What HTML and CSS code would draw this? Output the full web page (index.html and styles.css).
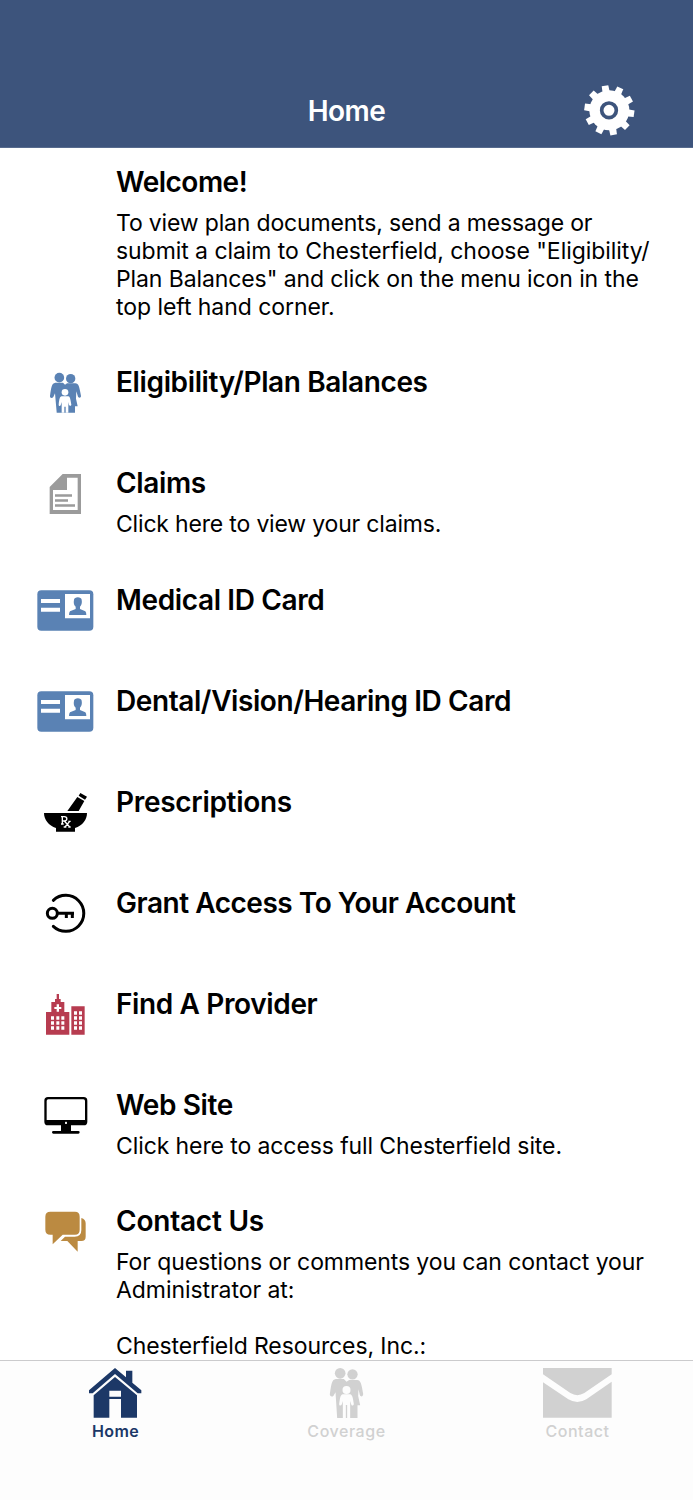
FILE: index.html
```
<!DOCTYPE html>
<html lang="en">
<head>
<meta charset="utf-8">
<title>Home</title>
<link rel="stylesheet" href="styles.css">
</head>
<body>
<div class="app">
  <header class="header">
    <h1 class="header-title">Home</h1>
    <svg class="gear" viewBox="0 0 240 225">
      <g fill="#fff">
        <circle cx="118" cy="106" r="60"/>
        <g id="teeth" transform="translate(118 106) rotate(-10)">
          <path id="t" d="M-11-50L-10-75H10L11-50Z"/>
          <use href="#t" transform="rotate(36)"/><use href="#t" transform="rotate(72)"/><use href="#t" transform="rotate(108)"/>
          <use href="#t" transform="rotate(144)"/><use href="#t" transform="rotate(180)"/><use href="#t" transform="rotate(216)"/>
          <use href="#t" transform="rotate(252)"/><use href="#t" transform="rotate(288)"/><use href="#t" transform="rotate(324)"/>
        </g>
      </g>
      <circle cx="117" cy="106" r="22" fill="#fff" stroke="#3d547c" stroke-width="11"/>
    </svg>
  </header>

  <main class="list">
    <section class="row">
      <div class="icon"></div>
      <div class="text">
        <h2 class="w-welcome">Welcome!</h2>
        <p><span class="b1">To view plan documents, send a message or</span><br><span class="b2">submit a claim to Chesterfield, choose "Eligibility/</span><br><span class="b3">Plan Balances" and click on the menu icon in the</span><br><span class="b4">top left hand corner.</span></p>
      </div>
    </section>
    <section class="row">
      <svg class="icon" viewBox="0 6 225 180">
        <g fill="#5a82b4">
          <circle cx="88" cy="53" r="14.5"/><circle cx="122" cy="56" r="14"/>
          <path d="M76 68H99L105 74L111 70H136C146 71 148 79 153 108C153 114 147 115 144 110L139 94L138 116L143 139H135V158H80V157L75 100L70 111C66 116 59 114 60 108C64 80 65 70 76 68Z"/>
        </g>
        <g fill="#fff"><circle cx="105" cy="97" r="10"/>
          <path d="M95 109H115C120 110 121 116 124 134C123 139 118 138 117 135L115 126V158H107V140H103V158H95V126L92 136C90 139 86 138 86 134C88 117 89 110 95 109Z"/></g>
      </svg>
      <div class="text"><h2 class="w-elig">Eligibility/Plan Balances</h2></div>
    </section>
    <section class="row">
      <svg class="icon" viewBox="0 3 225 180">
        <path fill="#9b9b9b" fill-rule="evenodd" d="M98 36H153V156H59V75ZM111 47V84H69V144H143V47Z"/>
        <path stroke="#9b9b9b" stroke-width="8" d="M75 100.500H126M75 115.500H114M75 130.500H135"/>
      </svg>
      <div class="text"><h2 class="w-claims">Claims</h2><p><span class="b5">Click here to view your claims.</span></p></div>
    </section>
    <section class="row">
      <svg class="icon" viewBox="0 0 225 180">
        <rect x="22" y="31" width="168" height="121" rx="12" fill="#5a82b4"/>
        <path fill="#fff" d="M33 57H90V69H33ZM33 83H90V95H33ZM105 42H180V115H105Z"/>
        <path fill="#5a82b4" d="M132 59C132 49 155 49 155 59C157 69 154 76 150 80V87L166 94Q169 97 169 105H117Q117 97 120 94L137 87V80C132 76 130 69 132 59Z"/>
      </svg>
      <div class="text"><h2 class="w-med">Medical ID Card</h2></div>
    </section>
    <section class="row">
      <svg class="icon" viewBox="0 0 225 180">
        <rect x="22" y="31" width="168" height="121" rx="12" fill="#5a82b4"/>
        <path fill="#fff" d="M33 57H90V69H33ZM33 83H90V95H33ZM105 42H180V115H105Z"/>
        <path fill="#5a82b4" d="M132 59C132 49 155 49 155 59C157 69 154 76 150 80V87L166 94Q169 97 169 105H117Q117 97 120 94L137 87V80C132 76 130 69 132 59Z"/>
      </svg>
      <div class="text"><h2 class="w-dental">Dental/Vision/Hearing ID Card</h2></div>
    </section>
    <section class="row">
      <svg class="icon" viewBox="0 0 225 180">
        <path d="M42 93H171C171 113 158 131 135 138V149H78V138C56 131 42 113 42 93ZM112 87L142 45L163 57L146 87ZM146 41L151 33L171 44L165 53Z"/>
        <path fill="none" stroke="#fff" stroke-width="4" d="M93 104H103C113 104 113 117 103 117H97M97 104V126M93 126H101M103 117L119 135M119 118L105 135M101 135H109M115 135H122M115 118H122"/>
      </svg>
      <div class="text"><h2 class="w-presc">Prescriptions</h2></div>
    </section>
    <section class="row">
      <svg class="icon" viewBox="0 0 225 180">
        <g fill="none" stroke="#000" stroke-width="9">
          <path stroke-linecap="round" d="M70 52A54 54 0 1 1 70 130"/>
          <circle cx="67" cy="91" r="15"/>
          <path d="M82 91H132M109 91V105M127 91V105" />
        </g>
      </svg>
      <div class="text"><h2 class="w-grant">Grant Access To Your Account</h2></div>
    </section>
    <section class="row">
      <svg class="icon" viewBox="0 0 225 180">
        <path fill="#b73c50" d="M48 84H64V54H75V45H80V30H87V45H92V54H103V84H118V152H48ZM124 67H164V152H124Z"/>
        <path fill="#fff" d="M80 61H87V69H94V75H87V83H80V75H73V69H80ZM63 97H72V107H63ZM79 97H88V107H79ZM94 97H103V107H94ZM63 112H72V122H63ZM79 112H88V122H79ZM94 112H103V122H94ZM63 127H72V137H63ZM79 127H88V137H79ZM94 127H103V137H94ZM132 82H141V92H132ZM147 82H156V92H147ZM132 97H141V107H132ZM147 97H156V107H147ZM132 112H141V122H132ZM147 112H156V122H147ZM132 127H141V137H132ZM147 127H156V137H147Z"/>
      </svg>
      <div class="text"><h2 class="w-find">Find A Provider</h2></div>
    </section>
    <section class="row">
      <svg class="icon" viewBox="0 0 225 180">
        <path fill-rule="evenodd" d="M54 36H161Q172 36 172 47V110Q172 121 161 121H123V138H145Q149 138 149 142T145 146H70Q66 146 66 142T70 138H93V121H54Q43 121 43 110V47Q43 36 54 36ZM55 43Q50 43 50 48V105H165V48Q165 43 160 43Z"/>
        <rect x="105" y="110" width="6" height="7" rx="2" fill="#fff"/>
      </svg>
      <div class="text"><h2 class="w-web">Web Site</h2><p><span class="b6">Click here to access full Chesterfield site.</span></p></div>
    </section>
    <section class="row">
      <svg class="icon" viewBox="0 4 225 180">
        <g fill="#bb8a41">
          <path d="M61 36H135Q149 36 149 51V90Q149 105 135 105H98L68 134V105H61Q46 105 46 90V51Q46 36 61 36Z"/>
          <path d="M154 55Q167 59 167 71V111Q167 124 154 124H143V156L112 124H92L105 111H134Q154 111 154 91Z"/>
        </g>
      </svg>
      <div class="text"><h2 class="w-contact">Contact Us</h2><p><span class="b7">For questions or comments you can contact your</span><br><span class="b8">Administrator at:</span><br><br><span class="b9">Chesterfield Resources, Inc.:</span></p></div>
    </section>
  </main>

  <nav class="tabs">
    <a class="tab active">
      <svg class="tab-icon" viewBox="-12 33 300 180">
        <g fill="#1c3867">
          <path d="M57 121L135 54L168 82V62H187V98L214 121V130H203L135 72L68 130H57Z"/>
          <path fill-rule="evenodd" d="M71 136L135 81L201 136V203H153V147H118V203H71ZM118 122V140H153V122Z"/>
        </g>
      </svg>
      <span>Home</span>
    </a>
    <a class="tab">
      <svg class="tab-icon" viewBox="4.500 33 300 180">
        <g fill="#d1d1d1">
          <circle cx="134" cy="70" r="16"/><circle cx="171" cy="73" r="15.500"/>
          <path d="M121 87H145L153 95L161 90H185C195 91 198 100 203 132C203 140 196 142 193 135L189 118L188 138L194 166H186V204H125L120 127L114 137C110 142 102 139 103 132C108 100 109 89 121 87Z"/>
        </g>
        <g fill="#fdfdfd"><circle cx="153" cy="120" r="12"/>
          <path d="M142 133H164C171 135 172 143 175 162C174 168 168 168 167 163L164 153V204H155V165H151V204H142V153L139 163C137 168 131 168 131 162C134 143 134 135 142 133Z"/></g>
      </svg>
      <span>Coverage</span>
    </a>
    <a class="tab">
      <svg class="tab-icon" viewBox="9 33 300 180">
        <path fill="#d1d1d1" d="M54 54H260V73L178 129Q157 142 136 129L54 73ZM54 97L130 148Q157 164 184 148L260 95V203H54Z"/>
      </svg>
      <span>Contact</span>
    </a>
  </nav>
</div>
</body>
</html>
```
FILE: styles.css
```
* { box-sizing: border-box; }
body { margin: 0; background: #fff; color: #000; font-family: Inter, "Liberation Sans", sans-serif; }
.app { height: 1500px; display: flex; flex-direction: column; overflow: hidden; }
.header {
  flex: none; height: 147.6px; padding-top: 75px; background: #3d547c; color: #fff;
  display: grid; grid-template-columns: 123px 1fr 123px; border-bottom: 1px solid #576b8e;
}
.header-title { grid-column: 2; margin: 0; text-align: center; font-size: 28px; font-weight: 600; line-height: 72px; letter-spacing: -.5px; }
.gear { width: 80px; height: 75px; }
.list { flex: 1; min-height: 0; overflow: hidden; }
.row { display: grid; grid-template-columns: 86px 1fr; padding-left: 30px; min-height: 101px; }
.icon { width: 75px; height: 60px; margin-top: 14px; }
.text { padding-top: 14px; white-space: nowrap; }
h2 { margin: 0; font-size: 28px; font-weight: 600; line-height: 40px; letter-spacing: -.37px; }
p { margin: 7px 0 27.5px; font-size: 23px; line-height: 28px; letter-spacing: -.1px; }
.w-welcome { letter-spacing: -.5px; }
.w-dental { letter-spacing: -.42px; }
.w-presc { letter-spacing: -.3px; }
.w-grant { letter-spacing: -.47px; }
.w-contact { letter-spacing: -.22px; }
.b1 { letter-spacing: -.17px; }
.b2, .b4, .b8 { letter-spacing: -.06px; }
.b5 { letter-spacing: -.18px; }
.tabs {
  flex: none; height: 140px; border-top: 1px solid #cbcbcd; background: #fdfdfd;
  display: grid; grid-template-columns: repeat(3, 1fr);
}
.tab { display: flex; flex-direction: column; align-items: center; color: #d1d1d1; font-size: 16px; font-weight: 500; line-height: 20px; letter-spacing: .55px; }
.tab.active { color: #1c3867; font-weight: 600; letter-spacing: .4px; }
.tab-icon { width: 100px; height: 60px; }
```
